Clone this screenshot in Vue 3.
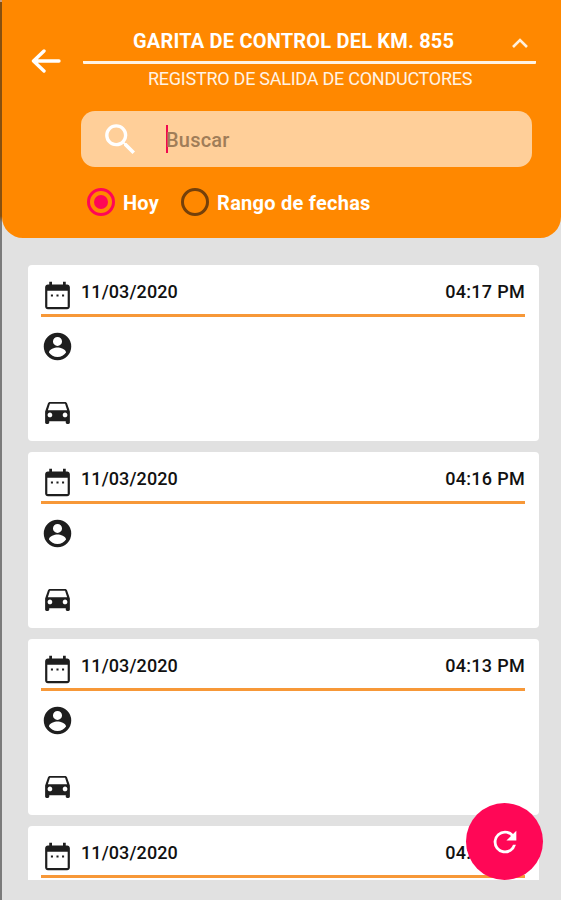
<template>
  <div class="screen">
    <div class="edge"></div>

    <!-- ── CABECERA ── -->
    <header class="header">
      <div class="title-row">
        <button class="btn-back" title="Volver">
          <svg width="30" height="24" viewBox="0 0 30 24">
            <path d="M13 2 L2.5 12 L13 22 M2.5 12 H28" />
          </svg>
        </button>
        <div class="titles">
          <div class="title-line">
            <h1 class="title">GARITA DE CONTROL DEL KM. 855</h1>
            <svg class="chevron" width="18" height="12" viewBox="0 0 18 12">
              <path d="M2 10 L9 3 L16 10" />
            </svg>
          </div>
          <p class="subtitle">REGISTRO DE SALIDA DE CONDUCTORES</p>
        </div>
      </div>

      <div class="search-field">
        <svg class="search-icon" width="41" height="41" viewBox="0 0 24 24">
          <path d="M15.5 14h-.79l-.28-.27A6.47 6.47 0 0 0 16 9.5 6.5 6.5 0 1 0 9.5 16c1.61 0 3.09-.59 4.23-1.57l.27.28v.79l5 4.99L20.49 19l-4.99-5zm-6 0C7.01 14 5 11.99 5 9.5S7.01 5 9.5 5 14 7.01 14 9.5 11.99 14 9.5 14z" />
        </svg>
        <span class="caret"></span>
        <input v-model="query" class="field-input" type="text" placeholder="Buscar" />
      </div>

      <div class="filters">
        <label
          v-for="f in filters"
          :key="f.id"
          class="filter"
          :class="{ active: filter === f.id }"
          @click="filter = f.id"
        >
          <span class="radio"></span>
          <span class="filter-label">{{ f.label }}</span>
        </label>
      </div>
    </header>

    <!-- ── LISTA DE REGISTROS ── -->
    <main class="list">
      <article v-for="r in records" :key="r.time" class="card">
        <div class="card-head">
          <svg class="icon" viewBox="0 0 24 24">
            <path d="M8.700 11.200H7.200v1.500h1.500v-1.500zm4.050 0h-1.500v1.500h1.500v-1.500zm4.050 0h-1.500v1.500h1.500v-1.500zM19 4h-1V2h-2v2H8V2H6v2H5c-1.110 0-1.990.9-1.990 2L3 20c0 1.100.89 2 2 2h14c1.100 0 2-.9 2-2V6c0-1.100-.9-2-2-2zm.4 16.400H4.600V8.600h14.800v11.800z" />
          </svg>
          <span class="date">{{ r.date }}</span>
          <span class="time">{{ r.time }}</span>
        </div>
        <div class="card-row driver">
          <svg class="icon" viewBox="0 0 24 24">
            <path fill-rule="evenodd" d="M12 2a10 10 0 1 0 0 20 10 10 0 0 0 0-20zM12 5a3.300 3.300 0 1 1 0 6.600 3.300 3.300 0 0 1 0-6.600zM12 19.700c-2.600 0-4.900-1.300-6.200-3.300.1-2.400 4.100-3.600 6.200-3.600s6.100 1.200 6.200 3.600c-1.300 2-3.600 3.300-6.200 3.300z" />
          </svg>
        </div>
        <div class="card-row vehicle">
          <svg class="icon" viewBox="0 0 24 24">
            <path d="M18.920 6.010C18.720 5.420 18.160 5 17.500 5h-11c-.66 0-1.210.42-1.420 1.010L3 12v8c0 .55.45 1 1 1h1c.55 0 1-.45 1-1v-1h12v1c0 .55.45 1 1 1h1c.55 0 1-.45 1-1v-8l-2.080-5.990zM6.500 16.200c-.95 0-1.700-.75-1.700-1.700s.75-1.700 1.700-1.700 1.700.75 1.700 1.700-.75 1.700-1.700 1.700zm11 0c-.95 0-1.700-.75-1.700-1.700s.75-1.700 1.700-1.700 1.700.75 1.700 1.700-.75 1.700-1.700 1.700zM5 11l1.500-4.700h11L19 11H5z" />
          </svg>
        </div>
      </article>
    </main>

    <button class="fab" title="Actualizar">
      <svg width="34" height="34" viewBox="0 0 24 24">
        <path d="M17.650 6.350A7.958 7.958 0 0 0 12 4a8 8 0 1 0 7.730 10h-2.080A5.990 5.990 0 0 1 12 18c-3.310 0-6-2.690-6-6s2.690-6 6-6c1.660 0 3.140.69 4.220 1.780L13 11h7V4l-2.350 2.350z" />
      </svg>
    </button>
  </div>
</template>

<script setup>
import { ref } from 'vue'

const query = ref('')
const filter = ref('hoy')

const filters = [
  { id: 'hoy', label: 'Hoy' },
  { id: 'rango', label: 'Rango de fechas' }
]

const records = ref([
  { date: '11/03/2020', time: '04:17 PM' },
  { date: '11/03/2020', time: '04:16 PM' },
  { date: '11/03/2020', time: '04:13 PM' },
  { date: '11/03/2020', time: '04:12 PM' }
])
</script>

<style>
body { margin: 0; }
</style>

<style scoped>
.screen {
  position: relative;
  box-sizing: border-box;
  height: 900px;
  padding-left: 2px;
  overflow: hidden;
  background: #e1e1e1;
  font-family: Roboto, "Liberation Sans", sans-serif;
}

/* ── Borde lateral ── */
.edge {
  position: absolute;
  left: 0;
  top: 0;
  width: 2px;
  height: 100%;
  background: linear-gradient(#c9a083 0 2px, #87500f 2px 216px, #7b7b7b 222px);
}

/* ── Cabecera ── */
.header {
  box-sizing: border-box;
  height: 237.5px;
  padding: 24px 25px 0 28px;
  background: #ff8800;
  border-radius: 0 0 21px 21px;
}
.title-row {
  display: flex;
  height: 87px;
}
.btn-back {
  width: 53px;
  height: 73px;
  padding: 0 0 0 1px;
  border: none;
  background: none;
  display: flex;
  align-items: center;
  cursor: pointer;
}
.btn-back path,
.chevron path {
  fill: none;
  stroke: #fff;
  stroke-width: 3.4;
  stroke-linecap: round;
  stroke-linejoin: round;
}
.chevron path {
  stroke-width: 2.6;
  stroke: #fff0dd;
  stroke-linecap: butt;
  stroke-linejoin: miter;
}
.titles { flex: 1; }
.title-line {
  display: flex;
  align-items: center;
  height: 37px;
  padding-right: 7px;
  border-bottom: 3px solid #fff3e4;
  border-radius: 1px;
}
.title {
  flex: 1;
  margin: 0;
  padding: 0 0 3px 50px;
  font-size: 20px;
  line-height: 24px;
  font-weight: 700;
  letter-spacing: 0.2px;
  color: #fff;
  white-space: nowrap;
}
.subtitle {
  margin: 4px 0 0;
  padding-left: 65px;
  font-size: 18px;
  line-height: 22px;
  letter-spacing: -0.25px;
  color: #fff3e4;
  white-space: nowrap;
}

/* ── Buscador ── */
.search-field {
  display: flex;
  align-items: center;
  box-sizing: border-box;
  height: 56px;
  margin: 0 4px 0 51px;
  padding-left: 19px;
  background: #ffcf99;
  border-radius: 14px;
}
.search-icon { fill: #fff; }
.caret {
  width: 2px;
  height: 28px;
  margin: 0 -2px 0 25px;
  background: #f0094e;
}
.field-input {
  flex: 1;
  min-width: 0;
  padding: 2px 0 0;
  border: none;
  outline: none;
  background: transparent;
  font: 500 20px Roboto, sans-serif;
  letter-spacing: 0.2px;
  color: #5c4a37;
}
.field-input::placeholder { color: #a07d58; }

/* ── Filtros ── */
.filters {
  display: flex;
  align-items: center;
  gap: 22px;
  height: 28px;
  margin: 21px 0 0 57px;
}
.filter {
  display: flex;
  align-items: center;
  gap: 8px;
  cursor: pointer;
}
.radio {
  box-sizing: border-box;
  display: flex;
  align-items: center;
  justify-content: center;
  width: 28px;
  height: 28px;
  border: 3px solid #74400a;
  border-radius: 50%;
}
.filter.active .radio { border-color: #ff0756; }
.filter.active .radio::after {
  content: '';
  width: 14px;
  height: 14px;
  border-radius: 50%;
  background: #ff0756;
}
.filter-label {
  padding-top: 2px;
  font-size: 20px;
  line-height: 24px;
  font-weight: 700;
  letter-spacing: 0.25px;
  color: #fff;
}

/* ── Lista ── */
.list {
  display: flex;
  flex-direction: column;
  gap: 11px;
  height: 614.5px;
  margin: 27.5px 22px 0 26px;
  overflow: hidden;
}
.card {
  box-sizing: border-box;
  flex-shrink: 0;
  height: 176px;
  padding: 0 14px 0 13px;
  background: #fff;
  border-radius: 4px;
}
.icon {
  display: block;
  width: 33px;
  height: 33px;
  fill: #1e1e1e;
}
.card-head {
  display: flex;
  align-items: flex-start;
  box-sizing: border-box;
  height: 52px;
  padding-top: 14px;
  border-bottom: 3px solid #f79838;
}
.date,
.time {
  margin-top: 2px;
  font-size: 18px;
  line-height: 22px;
  font-weight: 500;
  color: #111;
}
.date {
  margin-left: 7px;
  letter-spacing: 0.1px;
}
.time {
  margin-left: auto;
  letter-spacing: 0.3px;
}
.driver { margin-top: 13px; }
.vehicle { margin-top: 31.5px; }

/* ── Botón flotante ── */
.fab {
  position: absolute;
  right: 18px;
  bottom: 20px;
  width: 77px;
  height: 77px;
  padding: 0;
  border: none;
  border-radius: 50%;
  background: #ff0756;
  display: flex;
  align-items: center;
  justify-content: center;
  cursor: pointer;
}
.fab svg { fill: #fff; }
</style>
